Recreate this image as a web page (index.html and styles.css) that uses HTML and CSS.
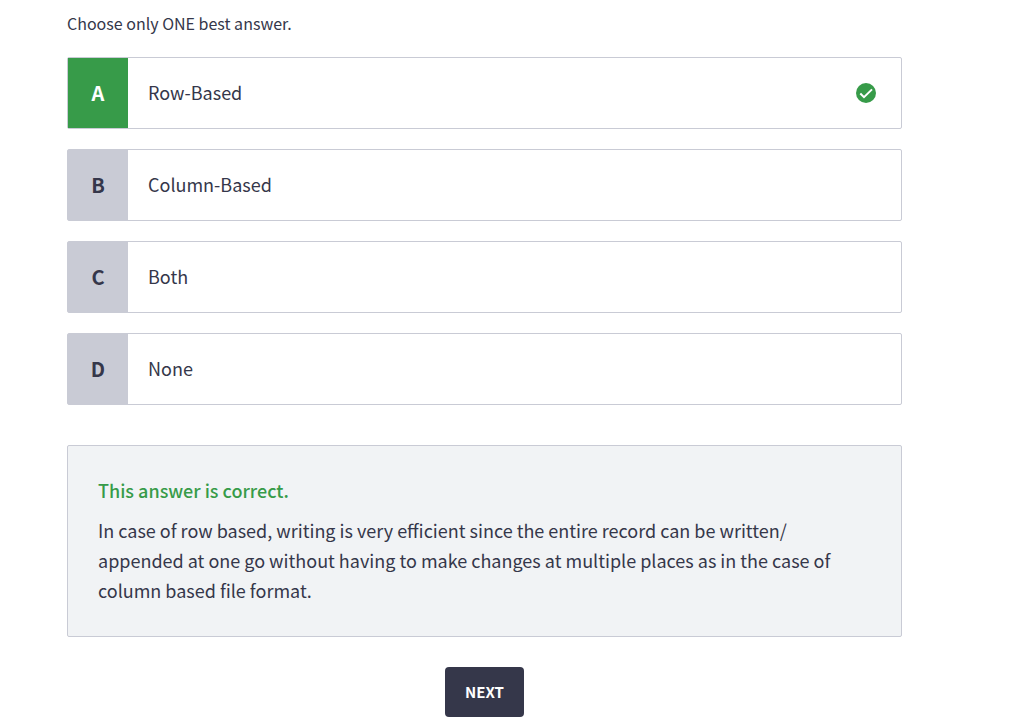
FILE: index.html
```
<!DOCTYPE html>
<html lang="en">
<head>
<meta charset="utf-8">
<meta name="viewport" content="width=device-width, initial-scale=1">
<title>Quiz</title>
<link rel="stylesheet" href="styles.css">
</head>
<body>
<main class="quiz">
  <p class="hint">Choose only ONE best answer.</p>
  <div class="options">
    <button type="button" class="option is-correct">
      <span class="letter">A</span>
      <span class="label">Row-Based</span>
      <svg class="check" viewBox="0 0 20 20" aria-hidden="true"><circle cx="10" cy="10" r="10"/><path d="M4.3 10.5 8 14.2 16 6.4"/></svg>
    </button>
    <button type="button" class="option"><span class="letter">B</span><span class="label">Column-Based</span></button>
    <button type="button" class="option"><span class="letter">C</span><span class="label">Both</span></button>
    <button type="button" class="option"><span class="letter">D</span><span class="label">None</span></button>
  </div>
  <section class="feedback">
    <h2 class="verdict">This answer is correct.</h2>
    <p class="explanation">In case of row based, writing is very efficient since the entire record can be written/<wbr>appended at one go without having to make changes at multiple places as in the case of column based file format.</p>
  </section>
  <button type="button" class="next">NEXT</button>
</main>
</body>
</html>
```
FILE: styles.css
```
* {
  box-sizing: border-box;
}

body {
  margin: 0;
  background: #fff;
  color: #35374a;
  font-family: "Noto Sans CJK SC", "Noto Sans", sans-serif;
}

button {
  font: inherit;
  color: inherit;
  cursor: pointer;
}

.quiz {
  display: flex;
  flex-direction: column;
  margin: 0 119px 0 67px;
  padding: 11px 0 5px;
}

.hint {
  margin: 0 0 22px;
  font-size: 16px;
  line-height: 24px;
}

.options {
  display: grid;
  gap: 20px;
}

.option {
  display: flex;
  align-items: center;
  min-height: 72px;
  padding: 0 25px 0 0;
  border: 1px solid #c9cbd5;
  border-radius: 2px;
  background: #fff;
  text-align: left;
  font-size: 18px;
  line-height: 30px;
}

.letter {
  display: flex;
  align-items: center;
  justify-content: center;
  align-self: stretch;
  width: 60px;
  background: #c9cbd5;
  font-size: 20px;
  font-weight: 700;
}

.is-correct .letter {
  background: #379b49;
  color: #fff;
}

.label {
  flex: 1;
  padding: 0 20px 2px;
}

.check {
  width: 20px;
  height: 20px;
  fill: #379b49;
}

.check path {
  fill: none;
  stroke: #fff;
  stroke-width: 2;
}

.feedback {
  margin-top: 40px;
  padding: 29px 30px 31px;
  border: 1px solid #c9cbd5;
  border-radius: 2px;
  background: #f1f3f5;
  font-size: 18px;
  line-height: 30px;
}

.verdict {
  margin: 0 0 10px;
  color: #379b49;
  font-size: 18px;
  font-weight: 500;
}

.explanation {
  margin: 0;
}

.next {
  align-self: center;
  margin-top: 30px;
  padding: 13px 20px;
  border: 0;
  border-radius: 4px;
  background: #35374a;
  color: #fff;
  font-size: 15px;
  font-weight: 700;
  line-height: 24px;
}
```
